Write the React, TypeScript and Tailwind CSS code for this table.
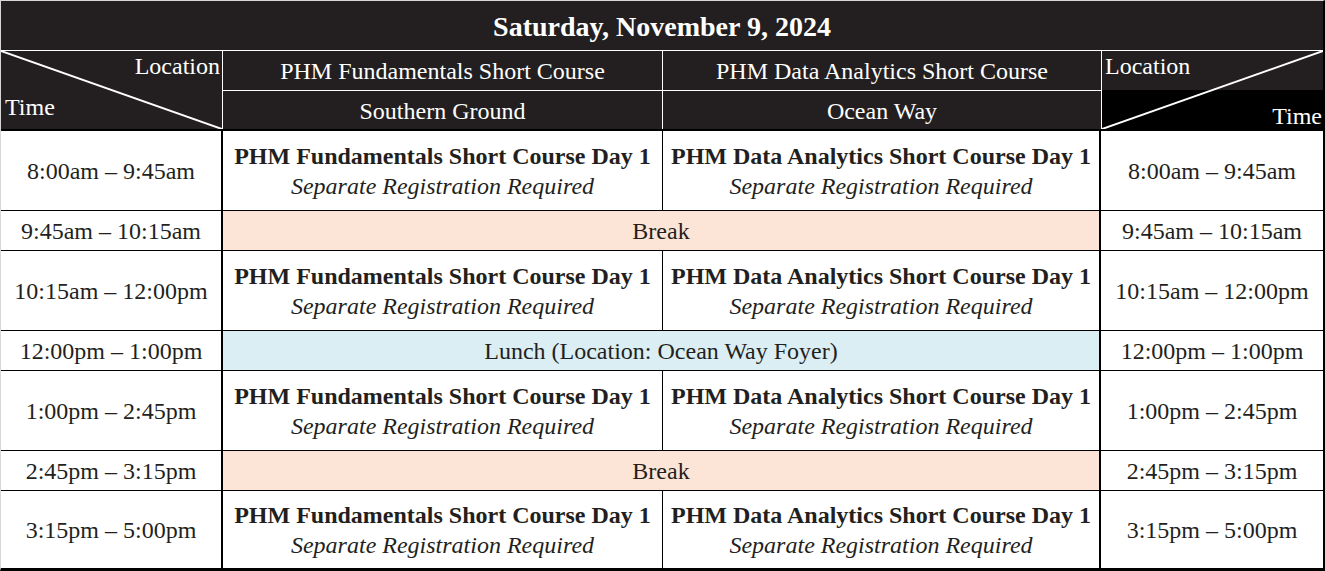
const serif = "font-['Liberation_Serif','Times_New_Roman',serif]";

type Slot = { time: string; kind: "course" | "break" | "lunch"; tall: boolean };

const slots: Slot[] = [
  { time: "8:00am – 9:45am", kind: "course", tall: true },
  { time: "9:45am – 10:15am", kind: "break", tall: false },
  { time: "10:15am – 12:00pm", kind: "course", tall: true },
  { time: "12:00pm – 1:00pm", kind: "lunch", tall: false },
  { time: "1:00pm – 2:45pm", kind: "course", tall: true },
  { time: "2:45pm – 3:15pm", kind: "break", tall: false },
  { time: "3:15pm – 5:00pm", kind: "course", tall: true },
];

function Diagonal({ flip }: { flip?: boolean }) {
  return (
    <svg className="absolute inset-0 w-full h-full" viewBox="0 0 100 100" preserveAspectRatio="none">
      <line
        x1="0"
        y1={flip ? "100" : "0"}
        x2="100"
        y2={flip ? "0" : "100"}
        stroke="white"
        strokeWidth={2}
        vectorEffect="non-scaling-stroke"
      />
    </svg>
  );
}

function CourseCell({ title, border }: { title: string; border: string }) {
  return (
    <div className={`flex flex-col items-center justify-center leading-[30px] ${border}`}>
      <span className="font-bold">{title}</span>
      <span className="italic">Separate Registration Required</span>
    </div>
  );
}

export default function App() {
  return (
    <div className={`${serif} w-[1325px] h-[571px] bg-white border-l border-t border-l-[#d6d6d6] border-t-[#d6d6d6] border-r-2 border-b-[3px] border-r-black border-b-black text-[24px] text-[#231f20]`}>
      <div className="h-[50px] bg-[#231f20] border-b border-white flex items-center justify-center pt-[2px] text-white font-bold text-[28px]">
        Saturday, November 9, 2024
      </div>

      <div className="grid grid-cols-[222px_440px_438px_1fr] grid-rows-[40px_38px] border-b-2 border-black text-white">
        <div className="row-span-2 relative bg-[#231f20] border-r border-white">
          <Diagonal />
          <span className="absolute right-[2px] top-0 leading-[30px]">Location</span>
          <span className="absolute left-[4px] top-[41px] leading-[30px]">Time</span>
        </div>
        <div className="bg-[#231f20] border-r border-b border-white flex items-center justify-center">
          PHM Fundamentals Short Course
        </div>
        <div className="bg-[#231f20] border-b border-white flex items-center justify-center">
          PHM Data Analytics Short Course
        </div>
        <div className="row-span-2 row-start-1 col-start-4 relative border-l border-white flex flex-col">
          <div className="h-[39px] bg-[#231f20]" />
          <div className="flex-1 bg-black" />
          <Diagonal flip />
          <span className="absolute left-[3px] top-0 leading-[30px]">Location</span>
          <span className="absolute right-[1px] top-[50px] leading-[30px]">Time</span>
        </div>
        <div className="bg-[#231f20] border-r border-white flex items-center justify-center pt-[2px]">Southern Ground</div>
        <div className="bg-[#231f20] flex items-center justify-center pt-[2px]">Ocean Way</div>
      </div>

      {slots.map((s, i) => {
        const last = i === slots.length - 1;
        const h = s.tall ? (last ? "h-[77px]" : "h-[80px]") : "h-[40px]";
        return (
          <div
            key={s.time}
            className={`grid grid-cols-[222px_440px_438px_1fr] ${h} ${last ? "" : "border-b border-black"}`}
          >
            <div className="flex items-center justify-center border-r-2 border-black">{s.time}</div>
            {s.kind === "course" ? (
              <>
                <CourseCell title="PHM Fundamentals Short Course Day 1" border="border-r border-black" />
                <CourseCell title="PHM Data Analytics Short Course Day 1" border="border-r-2 border-black" />
              </>
            ) : (
              <div
                className={`col-span-2 flex items-center justify-center border-r-2 border-black ${
                  s.kind === "break" ? "bg-[#fce4d6]" : "bg-[#daeef3]"
                }`}
              >
                {s.kind === "break" ? "Break" : "Lunch (Location: Ocean Way Foyer)"}
              </div>
            )}
            <div className="flex items-center justify-center">{s.time}</div>
          </div>
        );
      })}
    </div>
  );
}
